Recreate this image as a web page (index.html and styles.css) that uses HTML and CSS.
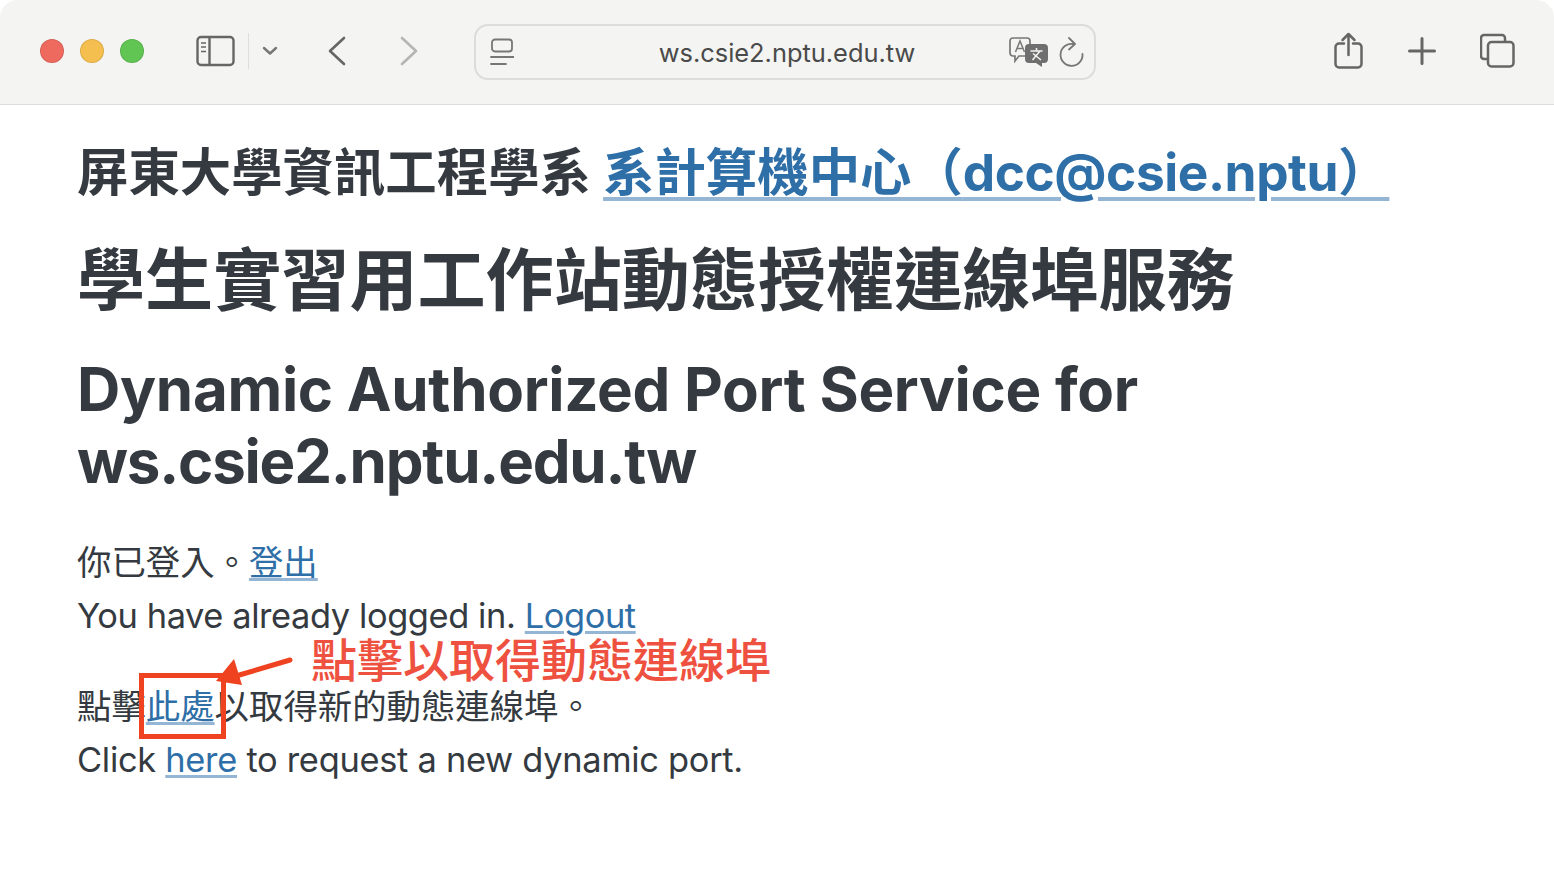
FILE: index.html
```html
<!DOCTYPE html>
<html lang="zh-Hant">
<head>
<meta charset="utf-8">
<title>Dynamic Authorized Port Service</title>
<link rel="stylesheet" href="styles.css">
</head>
<body>
<div class="window">
  <header class="toolbar">
    <div class="traffic">
      <span class="dot dot-red"></span>
      <span class="dot dot-yellow"></span>
      <span class="dot dot-green"></span>
    </div>
    <div class="sidebar-group">
      <svg class="ico" width="40" height="32" viewBox="0 0 40 32" fill="none" stroke="#666" stroke-width="2.4">
        <rect x="1.5" y="2" width="36" height="28" rx="3.5"/>
        <path d="M13.5 2v28"/>
        <path d="M5 8h5M5 12h5M5 16.500h5" stroke-width="1.600"/>
      </svg>
      <span class="divider"></span>
      <svg class="ico" width="16" height="12" viewBox="0 0 16 12" fill="none" stroke="#777" stroke-width="2.400" stroke-linecap="round" stroke-linejoin="round">
        <path d="M2 3l6 5.500L14 3"/>
      </svg>
    </div>
    <nav class="nav">
      <svg class="ico" width="20" height="30" viewBox="0 0 20 30" fill="none" stroke="#666" stroke-width="2.600" stroke-linecap="round" stroke-linejoin="round">
        <path d="M17 2L3 15l14 13"/>
      </svg>
      <svg class="ico" width="20" height="30" viewBox="0 0 20 30" fill="none" stroke="#b5b5b4" stroke-width="2.600" stroke-linecap="round" stroke-linejoin="round">
        <path d="M3 2l14 13L3 28"/>
      </svg>
    </nav>
    <div class="address">
      <svg class="ico" width="24" height="28" viewBox="0 0 24 28" fill="none" stroke="#777" stroke-width="1.800" stroke-linecap="round">
        <rect x="2" y="1.500" width="20" height="12" rx="3"/>
        <path d="M1 19h23M1 26h15"/>
      </svg>
      <span class="url">ws.csie2.nptu.edu.tw</span>
      <svg class="ico translate" width="40" height="30" viewBox="0 0 40 30">
        <path d="M4 1h14a3 3 0 0 1 3 3v12a3 3 0 0 1-3 3h-8l-4 5v-5H4a3 3 0 0 1-3-3V4a3 3 0 0 1 3-3z" fill="#f4f4f2" stroke="#777" stroke-width="1.700"/>
        <path d="M6.500 15L11 4l4.500 11M8.200 11.500h5.600" fill="none" stroke="#777" stroke-width="1.500"/>
        <path d="M20 7h15a4 4 0 0 1 4 4v11a4 4 0 0 1-4 4h-2v4l-6-4h-7a4 4 0 0 1-4-4V11a4 4 0 0 1 4-4z" fill="#6f6f6f"/>
        <path d="M21.500 14h12M27.500 11v3M23.500 23l7.500-9M24 16.500l8 6.500" fill="none" stroke="#f4f4f2" stroke-width="1.500"/>
      </svg>
      <svg class="ico reload" width="26" height="30" viewBox="0 0 26 30" fill="none" stroke="#777" stroke-width="1.800" stroke-linecap="round" stroke-linejoin="round">
        <path d="M15.500 7a11 11 0 1 0 9 10"/>
        <path d="M11 1l6 6-6 5.500"/>
      </svg>
    </div>
    <div class="actions">
      <svg class="ico share" width="30" height="37" viewBox="0 0 30 37" fill="none" stroke="#666" stroke-width="2.500" stroke-linecap="round" stroke-linejoin="round">
        <path d="M10 11.500H5a3.500 3.500 0 0 0-3.500 3.500v17A3.500 3.500 0 0 0 5 35.500h19a3.500 3.500 0 0 0 3.500-3.500V15a3.500 3.500 0 0 0-3.500-3.500h-5"/>
        <path d="M14.500 23V2M8.500 8l6-6 6 6"/>
      </svg>
      <svg class="ico" width="28" height="28" viewBox="0 0 28 28" fill="none" stroke="#666" stroke-width="3" stroke-linecap="round">
        <path d="M14 1.500v25M1.500 14h25"/>
      </svg>
      <svg class="ico" width="36" height="36" viewBox="0 0 36 36" fill="none" stroke="#666" stroke-width="2.500">
        <path d="M7 26H4a3 3 0 0 1-3-3V5a3 3 0 0 1 3-3h18a3 3 0 0 1 3 3v3"/>
        <rect x="8" y="9" width="25.500" height="24.500" rx="3.500"/>
      </svg>
    </div>
  </header>
  <main class="page">
    <h3 class="dept">屏東大學資訊工程學系 <a href="#">系計算機中心（<span class="dept-mail">dcc@csie.nptu</span>）</a></h3>
    <h1 class="title-zh">學生實習用工作站動態授權連線埠服務</h1>
    <h2 class="title-en">Dynamic Authorized Port Service for <span class="title-host">ws.csie2.nptu.edu.tw</span></h2>
    <p class="para">你已登入。<a href="#">登出</a><br><span class="en-logged">You have already logged in. <a href="#">Logout</a></span></p>
    <p class="para">點擊<a href="#">此處</a>以取得新的動態連線埠。<br><span class="en-click">Click <a href="#">here</a> to request a new dynamic port.</span></p>
    <div class="note-box"></div>
    <svg class="note-arrow" width="82" height="36" viewBox="0 0 82 36">
      <path d="M76 5L22 21" fill="none" stroke="#ee4220" stroke-width="5" stroke-linecap="round"/>
      <path d="M2 26L20 4l8 26z" fill="#ee4220"/>
    </svg>
    <span class="note-text">點擊以取得動態連線埠</span>
  </main>
</div>
</body>
</html>
```

FILE: styles.css
```css
* { box-sizing: border-box; }
html, body { margin: 0; padding: 0; background: #fff; }
body {
  font-family: Inter, "Noto Sans CJK TC", sans-serif;
  color: #343a40;
  width: 1554px;
  height: 872px;
  overflow: hidden;
}
.window { position: relative; }
.toolbar {
  height: 105px;
  background: #f4f4f2;
  border-bottom: 1px solid #dcdcdc;
  border-radius: 18px 18px 0 0;
  display: flex;
  align-items: center;
  padding: 0 38px 2px 40px;
}
.ico { display: block; flex: none; }
.traffic { display: flex; gap: 16px; }
.dot { width: 24px; height: 24px; border-radius: 50%; border: 1px solid rgba(0,0,0,.1); }
.dot-red { background: #ee6a5f; }
.dot-yellow { background: #f5bf4f; }
.dot-green { background: #61c554; }
.sidebar-group { display: flex; align-items: center; margin-left: 52px; }
.divider { width: 1px; height: 36px; background: #dedede; margin: 0 13px 0 12px; }
.nav { display: flex; gap: 52px; margin-left: 49px; }
.address {
  width: 622px;
  height: 56px;
  margin: 2px 0 0 55px;
  border: 2px solid #dcdcda;
  border-radius: 14px;
  display: flex;
  align-items: center;
  padding: 0 10px 0 14px;
}
.url { flex: 1; text-align: center; font-size: 25.400px; color: #4a4a4a; padding-left: 55px; }
.translate { margin-left: 4px; }
.reload { margin-left: 9px; }
.actions { display: flex; align-items: center; gap: 44px; margin-left: auto; }
.share { margin-bottom: 2px; }
.page { position: relative; padding: 37px 78px 0 77px; }
.page a { color: #2f6fa8; text-decoration: underline; text-decoration-color: #94b5d3; text-decoration-thickness: 3px; }
.dept { font-size: 51.400px; line-height: 61px; font-weight: 700; margin: 0; }
.dept a { text-decoration-thickness: 4px; text-underline-offset: 6px; }
.dept-mail { letter-spacing: -0.450px; }
.title-zh { font-size: 68.100px; line-height: 1.2; font-weight: 700; margin: 37px 0 0; }
.title-en { font-size: 60px; line-height: 72px; font-weight: 700; margin: 31px 0 0; letter-spacing: -0.3px; }
.title-host { letter-spacing: -1.200px; }
.para { font-size: 34.400px; line-height: 53px; margin: 39px 0 0; }
.para + .para { margin-top: 38px; }
.para a { text-underline-offset: 3px; }
.en-logged { letter-spacing: -0.400px; }
.en-click { letter-spacing: -0.280px; }
.note-box { position: absolute; left: 139px; top: 568px; width: 87px; height: 66px; border: 5px solid #ee4220; }
.note-arrow { position: absolute; left: 214px; top: 550px; }
.note-text { position: absolute; left: 311px; top: 526px; font-size: 46px; line-height: 58px; font-weight: 500; color: #ef5140; white-space: nowrap; }
```
